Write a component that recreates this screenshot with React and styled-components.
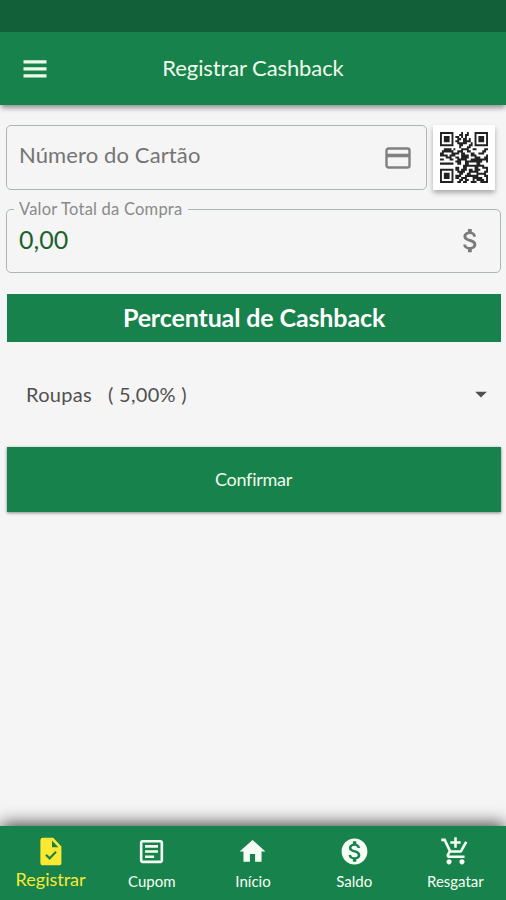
import styled, { createGlobalStyle } from 'styled-components'
import {
    MdAttachMoney,
    MdArrowDropDown,
    MdOutlineArticle,
    MdHome,
    MdMonetizationOn,
    MdAddShoppingCart,
} from 'react-icons/md'

const QR_ROWS = [
    '1111111000010010001111111',
    '1000001000110110001000001',
    '1011101011010100001011101',
    '1011101001101101001011101',
    '1011101011001111001011101',
    '1000001001111100101000001',
    '1111111000110001101111111',
    '0000000000100011000000000',
    '0011110100011110011000011',
    '0111111001110011000000110',
    '1100001111011000110011100',
    '1111011100011110111000001',
    '0001110011011110001110011',
    '1100011001111100111111111',
    '0000000011100111111111001',
    '1111111001100110000110000',
    '0000000000001111111111100',
    '0000000011001100001100111',
    '1111111011011101101110001',
    '1000001001111001111100011',
    '1011101000110011000111110',
    '1011101011100111111100011',
    '1011101011011100011111001',
    '1000001000110110010111101',
    '1111111001101100111001111',
]

const tabs = [
    { label: 'Registrar', Icon: TaskIcon, active: true },
    { label: 'Cupom', Icon: MdOutlineArticle },
    { label: 'Início', Icon: MdHome },
    { label: 'Saldo', Icon: MdMonetizationOn },
    { label: 'Resgatar', Icon: MdAddShoppingCart },
]

function QrCode() {
    const d = QR_ROWS.map((row, y) =>
        [...row].map((cell, x) => (cell === '1' ? `M${x} ${y}h1v1h-1z` : '')).join('')
    ).join('')

    return (
        <svg width="48" height="51" viewBox="0 0 25 25" preserveAspectRatio="none">
            <path d={d} fill="#222" />
        </svg>
    )
}

function MenuIcon() {
    return (
        <svg width="24" height="18" viewBox="0 0 24 18" fill="currentColor">
            <path d="M.5 .3h23v3.2H.5zM.5 7.3h23v3.2H.5zM.5 14.2h23v3.2H.5z" />
        </svg>
    )
}

function CardIcon() {
    return (
        <svg width="26" height="22" viewBox="0 0 26 22" fill="none" stroke="currentColor">
            <rect x="1.5" y="1.5" width="23" height="19" rx="2" strokeWidth="2.4" />
            <path d="M1.5 8.5h23" strokeWidth="3.6" />
        </svg>
    )
}

function TaskIcon({ size }) {
    return (
        <svg width={size} height={size} viewBox="0 0 31 31">
            <path
                d="M8 1.8h10.2l8.2 8.7v16.2a2.6 2.6 0 0 1-2.6 2.6H8a2.6 2.6 0 0 1-2.6-2.6V4.4A2.6 2.6 0 0 1 8 1.8zM17 4.6v6.6h6.4z"
                fill="currentColor"
                fillRule="evenodd"
            />
            <path d="M11 18.8l3.6 3.6 6.4-6.6" fill="none" stroke="#18824d" strokeWidth="2.2" />
        </svg>
    )
}

export default function App() {
    return (
        <>
            <GlobalStyle />
            <Screen>
                <StatusBar />
                <AppBar>
                    <MenuButton aria-label="Menu">
                        <MenuIcon />
                    </MenuButton>
                    <Title>Registrar Cashback</Title>
                </AppBar>
                <Content>
                    <CardRow>
                        <CardField>
                            <Placeholder>Número do Cartão</Placeholder>
                            <CardIcon />
                        </CardField>
                        <QrButton aria-label="QR Code">
                            <QrCode />
                        </QrButton>
                    </CardRow>
                    <ValueField>
                        <Legend>Valor Total da Compra</Legend>
                        <ValueRow>
                            <Value>0,00</Value>
                            <MdAttachMoney size={31} />
                        </ValueRow>
                    </ValueField>
                    <SectionTitle>Percentual de Cashback</SectionTitle>
                    <Select>
                        <span>Roupas</span>
                        <Percent>( 5,00% )</Percent>
                        <MdArrowDropDown size={28} />
                    </Select>
                    <ConfirmButton>Confirmar</ConfirmButton>
                </Content>
                <NavBar>
                    {tabs.map(({ label, Icon, active }) => (
                        <Tab key={label} $active={active}>
                            <Icon size={31} />
                            <TabLabel $active={active}>{label}</TabLabel>
                        </Tab>
                    ))}
                </NavBar>
            </Screen>
        </>
    )
}

const GlobalStyle = createGlobalStyle`
    * {
        box-sizing: border-box;
    }
    body {
        margin: 0;
        background-color: #f5f5f5;
        font-family: Lato, 'Open Sans', sans-serif;
    }
    button {
        border: none;
        padding: 0;
        font-family: inherit;
    }
    svg {
        display: block;
        flex-shrink: 0;
    }
`
const Screen = styled.div`
    display: flex;
    flex-direction: column;
    width: 506px;
    height: 900px;
    overflow: hidden;
    background-color: #f5f5f5;
`
const StatusBar = styled.div`
    height: 32px;
    background-color: #11603a;
`
const AppBar = styled.header`
    display: grid;
    grid-template-columns: 69px 1fr 69px;
    align-items: center;
    height: 73px;
    background-color: #18824d;
    color: #eefbe9;
    box-shadow: 0 4px 5px -1px rgba(0, 0, 0, 0.4);
`
const MenuButton = styled.button`
    display: flex;
    justify-content: center;
    background: none;
    color: inherit;
`
const Title = styled.h1`
    margin: 0;
    padding-bottom: 1px;
    text-align: center;
    font-size: 22px;
    font-weight: 400;
    line-height: 30px;
    letter-spacing: -0.1px;
`
const Content = styled.main`
    display: flex;
    flex-direction: column;
    flex: 1;
    padding: 20px 5px 0 6px;
`
const CardRow = styled.div`
    display: flex;
    gap: 6px;
    height: 65px;
`
const CardField = styled.div`
    display: flex;
    align-items: center;
    justify-content: space-between;
    width: 421px;
    padding: 0 15px 0 12px;
    border: 1px solid #a9b9b0;
    border-radius: 5px;
    color: #808080;
`
const Placeholder = styled.span`
    padding-bottom: 7px;
    font-size: 22px;
    font-weight: 400;
    letter-spacing: 0.12px;
    color: #747474;
`
const QrButton = styled.button`
    display: flex;
    align-items: center;
    justify-content: center;
    width: 62px;
    height: 65px;
    background-color: #fff;
    box-shadow: 0 3px 5px rgba(0, 0, 0, 0.3);
`
const ValueField = styled.fieldset`
    height: 73px;
    margin: 10px 0 0;
    min-width: 0;
    padding: 0 14px 0 7px;
    border: 1px solid #a9b9b0;
    border-radius: 5px;
    color: #7b7b7b;
`
const Legend = styled.legend`
    padding: 0 6px 0 5px;
    font-size: 16.5px;
    line-height: 19px;
    letter-spacing: 0.22px;
    color: #8a8a8a;
`
const ValueRow = styled.div`
    display: flex;
    align-items: center;
    justify-content: space-between;
    height: 43px;
    padding-left: 5px;
`
const Value = styled.span`
    padding-bottom: 3px;
    font-size: 25px;
    color: #1c6130;
`
const SectionTitle = styled.h2`
    height: 48px;
    margin: 21px 0 0 1px;
    background-color: #18824d;
    color: #fff;
    text-align: center;
    font-size: 25px;
    font-weight: 700;
    line-height: 47px;
    letter-spacing: -0.12px;
`
const Select = styled.div`
    display: flex;
    align-items: center;
    height: 105px;
    padding: 0 6px 2px 20px;
    font-size: 20px;
    letter-spacing: 0.3px;
    color: #505050;
    svg {
        margin-left: auto;
    }
`
const Percent = styled.span`
    margin-left: 16px;
`
const ConfirmButton = styled.button`
    height: 65px;
    margin-left: 1px;
    padding: 0 1px 1px 0;
    background-color: #18824d;
    color: #f0fbea;
    font-size: 18px;
    letter-spacing: -0.25px;
    box-shadow: 0 1px 3px rgba(0, 0, 0, 0.45);
`
const NavBar = styled.nav`
    display: grid;
    grid-template-columns: repeat(5, 1fr);
    height: 74px;
    background-color: #18824d;
    box-shadow: 0 -3px 16px -1px rgba(0, 0, 0, 0.75);
`
const Tab = styled.div`
    display: flex;
    flex-direction: column;
    align-items: center;
    padding-top: 10px;
    color: ${({ $active }) => ($active ? '#fbe830' : '#f6fff3')};
`
const TabLabel = styled.span`
    font-size: ${({ $active }) => ($active ? '18px' : '15px')};
    line-height: ${({ $active }) => ($active ? '24px' : '29px')};
`
